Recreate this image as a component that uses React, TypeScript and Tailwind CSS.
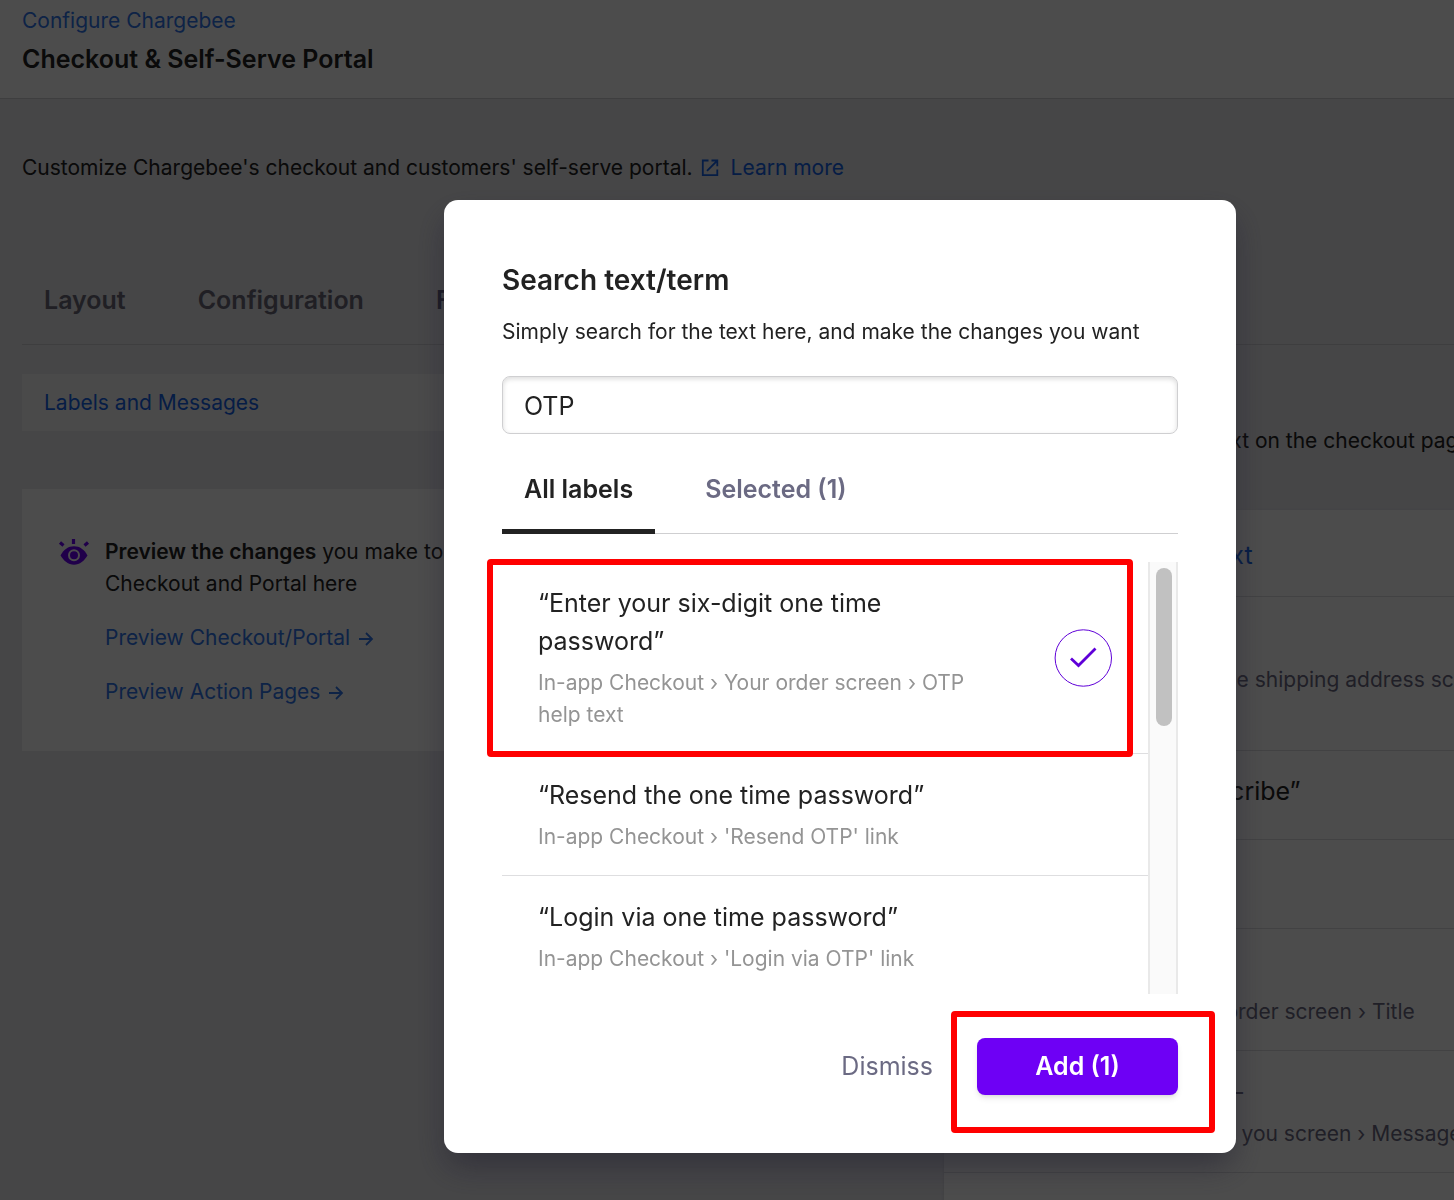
import React, { useState } from 'react';

interface LabelItem {
  id: string;
  title: string;
  path: string;
}

const labels: LabelItem[] = [
  {
    id: 'enter-otp',
    title: '“Enter your six-digit one time password”',
    path: 'In-app Checkout › Your order screen › OTP help text',
  },
  { id: 'resend-otp', title: '“Resend the one time password”', path: "In-app Checkout › 'Resend OTP' link" },
  { id: 'login-otp', title: '“Login via one time password”', path: "In-app Checkout › 'Login via OTP' link" },
];

const EyeIcon = () => (
  <svg className="h-8 w-8 shrink-0" viewBox="0 0 32 32" fill="none" aria-hidden="true">
    <path d="M2.500 19.500C5.500 13.500 10.300 10.200 16 10.200s10.500 3.300 13.500 9.300C26.500 24.500 21.700 28.800 16 28.800S5.500 24.500 2.500 19.500z" fill="#6b00f7" />
    <circle cx="16" cy="19.300" r="5" stroke="#fff" strokeWidth="2" />
    <path d="M15.500 3v5M2 6.500l3.500 3M30 6.500l-3.500 3" stroke="#6b00f7" strokeWidth="3.200" />
  </svg>
);

const ExternalIcon = () => (
  <svg className="h-[18px] w-[18px]" viewBox="0 0 18 18" fill="none" stroke="currentColor" strokeWidth="1.800" aria-hidden="true">
    <path d="M7.500 1.500H1.800v14.700h14.500v-5.800M10.500 1.500h5.800v5.800M16 1.800L6 11.800" />
  </svg>
);

const ArrowIcon = () => (
  <svg className="h-4 w-4" viewBox="0 0 16 16" fill="none" stroke="currentColor" strokeWidth="1.800" aria-hidden="true">
    <path d="M1 9h13M8 3l6 6-6 6" />
  </svg>
);

const PageRow: React.FC<{ title: React.ReactNode; children: React.ReactNode }> = ({ title, children }) => (
  <li className="border-b border-[#dcdce0] py-[22px] pl-11">
    <p className="text-[25px]/[38px] text-[#222]">{title}</p>
    <p className="mt-[7px] text-[21px]/[32px] text-[#6b6a83]">{children}</p>
  </li>
);

const Page = () => (
  <div className="h-screen overflow-hidden whitespace-nowrap bg-[#e9e9ee] text-[21px]/[32px] text-[#222]">
    <header className="border-b border-[#cfcfd4] bg-white px-[22px] pt-[5px] pb-5">
      <a href="#configure" className="text-[#2f75ec]">Configure Chargebee</a>
      <h1 className="mt-[3px] text-[25px]/[38px] font-semibold">Checkout &amp; Self-Serve Portal</h1>
    </header>

    <div className="pl-[22px]">
      <p className="mt-[53px] flex items-center gap-2">
        Customize Chargebee's checkout and customers' self-serve portal.
        <a href="#learn" className="flex items-center gap-3 text-[#1462e8]">
          <ExternalIcon />
          Learn more
        </a>
      </p>

      <nav className="mt-[97px] flex gap-[72px] border-b border-[#cfcfd4] px-[22px] pb-[25px] text-[25px]/[38px] font-semibold text-[#6b6a78]">
        <a href="#layout">Layout</a>
        <a href="#configuration">Configuration</a>
        <a href="#fields" className="text-[#5a5878]">Fields</a>
      </nav>

      <div className="flex items-start justify-between">
        <aside className="mt-[29px] w-[480px]">
          <a href="#labels" className="block bg-[#f8f8f8] px-[22px] py-3 leading-[33px] text-[#1462e8]">Labels and Messages</a>
          <div className="mt-[58px] flex gap-[15px] bg-white px-9 pt-[47px] pb-[43px]">
            <EyeIcon />
            <div>
              <p><b className="font-semibold">Preview the changes</b> you make to your</p>
              <p>Checkout and Portal here</p>
              <a href="#preview-checkout" className="mt-[22px] flex items-center gap-2 text-[#2f75ec]">Preview Checkout/Portal <ArrowIcon /></a>
              <a href="#preview-actions" className="mt-[22px] flex items-center gap-2 text-[#2f75ec]">Preview Action Pages <ArrowIcon /></a>
            </div>
          </div>
        </aside>

        <section className="w-[510px] shrink-0">
          <p className="mt-20 mb-[53px]">Search and customize any text on the checkout pages</p>
          <div className="bg-white pb-40 shadow">
            <a href="#search" className="block border-b border-[#dcdce0] pt-[26px] pb-[22px] pl-11 text-[25px]/[38px] text-[#1462e8]">Search by label or text</a>
            <ul>
              <PageRow title="“Ship to”">
                In-app Checkout › Edit the shipping address screen
                <br />
                › Title
              </PageRow>
              <li className="border-b border-[#dcdce0] pt-[21px] pb-[29px] pl-11 text-[25px]/[38px]">“Complete and Subscribe”</li>
              <li className="border-b border-[#dcdce0] pt-[21px] pb-[29px] pl-11 text-[25px]/[38px]">“Your order”</li>
              <PageRow title="“Order summary”">In-app Checkout › Your order screen › Title</PageRow>
              <PageRow title={<span className="pl-[230px] text-[#6b6a83]">—</span>}>In-app Checkout › Thank you screen › Message</PageRow>
            </ul>
          </div>
        </section>
      </div>
    </div>
  </div>
);

interface LabelRowProps {
  label: LabelItem;
  checked: boolean;
  onToggle: () => void;
}

const LabelRow: React.FC<LabelRowProps> = ({ label, checked, onToggle }) => (
  <li className="border-b border-[#dedee0]">
    <label className="flex cursor-pointer items-center justify-between px-9 py-[22px]">
      <span className="w-[450px]">
        <span className="block max-w-[400px] text-[25px]/[38px] text-[#222]">{label.title}</span>
        <span className="mt-[7px] block text-[21px]/[32px] text-[#949494]">{label.path}</span>
      </span>
      <input type="checkbox" className="sr-only" checked={checked} onChange={onToggle} />
      {checked && (
        <svg className="h-[58px] w-[58px] shrink-0" viewBox="0 0 58 58" fill="none" stroke="#5f00d8" aria-hidden="true">
          <circle cx="29.300" cy="29" r="28.200" strokeWidth="1" />
          <path d="M17 29.500l7.500 7 17-17" strokeWidth="2.800" />
        </svg>
      )}
    </label>
  </li>
);

const SearchModal = () => {
  const [query, setQuery] = useState('OTP');
  const [selected, setSelected] = useState<string[]>(['enter-otp']);

  const toggle = (id: string) => {
    setSelected((prev) => (prev.includes(id) ? prev.filter((x) => x !== id) : [...prev, id]));
  };

  return (
    <div className="fixed inset-0 flex items-start justify-center bg-black/70 pt-[200px] pl-[226px]" role="dialog" aria-modal="true" aria-labelledby="search-title">
      <div className="w-full max-w-[792px] rounded-[14px] bg-white px-[58px] pt-[61px] pb-[58px] shadow-[0_16px_32px_-4px_rgba(35,33,48,0.6)]">
        <h2 id="search-title" className="text-[28px]/[38px] font-semibold text-[#222]">Search text/term</h2>
        <p id="search-help" className="mt-[17px] text-[21px]/[32px] text-[#222]">Simply search for the text here, and make the changes you want</p>
        <input
          type="text"
          aria-labelledby="search-title"
          aria-describedby="search-help"
          value={query}
          onChange={(e) => setQuery(e.target.value)}
          className="mt-7 block h-[58px] w-full rounded-lg border border-[#cfcfd1] px-[21px] pt-0.5 text-[25px] text-[#222] shadow-[inset_0_2px_5px_rgba(0,0,0,0.14)] focus:outline-none"
        />

        <div role="tablist" className="mt-9 flex gap-7 border-b border-[#cfcfd1] text-[25px]/[38px] font-semibold">
          <button type="button" role="tab" aria-selected="true" className="-mb-px border-b-[5px] border-[#222] px-[22px] pb-[21px] text-[#222]">All labels</button>
          <button type="button" role="tab" aria-selected="false" className="px-[22px] pb-[25px] text-[#6b6a83]">Selected ({selected.length})</button>
        </div>

        <div className="relative mt-7 flex h-[432px]">
          <ul className="flex-1 overflow-hidden">
            {labels.map((label) => (
              <LabelRow key={label.id} label={label} checked={selected.includes(label.id)} onToggle={() => toggle(label.id)} />
            ))}
          </ul>
          <div className="w-[30px] border-x-2 border-[#e9e9e9] bg-[#fafafa] pt-1.5 pr-1 pl-1.5">
            <div className="h-[158px] rounded-full bg-[#c1c1c1]" />
          </div>
          <div className="pointer-events-none absolute -top-[3px] -left-[15px] h-[198px] w-[646px] rounded-sm border-[6px] border-[#f00]" />
        </div>

        <div className="mt-11 flex items-center justify-end gap-11">
          <button type="button" className="text-[25px] text-[#6b6a83]">Dismiss</button>
          <div className="relative">
            <button type="button" className="h-[57px] w-[201px] rounded-lg bg-[#6e00f5] text-[25px] font-semibold text-white shadow-md">Add ({selected.length})</button>
            <div className="pointer-events-none absolute -top-[27px] -right-[37px] -bottom-[38px] -left-[26px] rounded-sm border-[6px] border-[#f00]" />
          </div>
        </div>
      </div>
    </div>
  );
};

export default function App() {
  return (
    <div className="font-['Inter',sans-serif]">
      <Page />
      <SearchModal />
    </div>
  );
}
